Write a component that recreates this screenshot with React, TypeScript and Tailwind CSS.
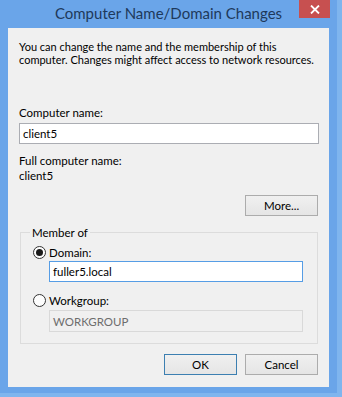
import React from 'react';

const font = { fontFamily: 'Lato, "Liberation Sans", sans-serif' };

function Radio({ checked }: { checked?: boolean }) {
  return (
    <span className="flex h-[13px] w-[13px] shrink-0 items-center justify-center rounded-full border border-[#333333] bg-[#fdfdfd]">
      {checked && <span className="h-[7px] w-[7px] rounded-full bg-[#1a1a1a]" />}
    </span>
  );
}

function Button({ label, primary }: { label: string; primary?: boolean }) {
  return (
    <button
      className={`flex h-[21px] w-[73px] items-center justify-center border bg-gradient-to-b from-[#f0f0f0] to-[#e5e5e5] text-[11.5px] leading-[13px] text-black ${
        primary ? 'border-[#3c7fb1]' : 'border-[#acacac]'
      }`}
    >
      {label}
    </button>
  );
}

export default function App() {
  return (
    <div className="h-[397px] w-[342px] overflow-hidden bg-[#7fb5ee]" style={font}>
      <div className="flex h-[393px] w-[337px] flex-col bg-[#6aa5e9] pb-[6px] pl-[8px] pr-[8px]">
        {/* Title bar */}
        <div className="grid h-[28px] shrink-0 grid-cols-[1fr_auto_1fr]">
          <div />
          <div className="pt-[3px] text-[15px] leading-[20px] text-[#1e395b]">Computer Name/Domain Changes</div>
          <div className="flex justify-end">
            <div className="-mr-[1px] flex h-[18px] w-[31px] items-center justify-center bg-[#c75050]">
              <svg width="10" height="9" viewBox="0 0 10 9">
                <path d="M1 0.5 L9 8.5 M9 0.5 L1 8.5" stroke="white" strokeWidth="1.8" />
              </svg>
            </div>
          </div>
        </div>

        {/* Client area */}
        <div className="flex flex-1 flex-col bg-[#f0f0f0] pl-[11px] pr-[10px] pt-[12px] text-[11.5px] leading-[13px] text-black">
          <p className="whitespace-nowrap text-[11px]">
            You can change the name and the membership of this
            <br />
            computer. Changes might affect access to network resources.
          </p>

          <div className="mt-[40px]">Computer name:</div>
          <div className="mt-[4px] flex h-[21px] items-center border border-[#abadb3] bg-white px-[3px]">client5</div>

          <div className="mt-[9px] leading-[15px]">Full computer name:</div>
          <div className="leading-[15px]">client5</div>

          <div className="mt-[12px] flex justify-end pr-[1px]">
            <Button label="More..." />
          </div>

          <fieldset className="mx-[1px] mt-[10px] border border-[#dcdcdc] pb-[11px] pl-[12px] pr-[14px]">
            <legend className="ml-[-3px] px-[2px]">Member of</legend>
            <div className="mt-[7px] flex items-center gap-[3px]">
              <Radio checked />
              <span>Domain:</span>
            </div>
            <div className="ml-[16px] mt-[2px] flex h-[21px] items-center border border-[#569de5] bg-white px-[3px]">
              fuller5.local
            </div>
            <div className="mt-[12px] flex items-center gap-[3px]">
              <Radio />
              <span>Workgroup:</span>
            </div>
            <div className="ml-[16px] mt-[3px] flex h-[22px] items-center border border-[#d9d9d9] bg-[#f0f0f0] px-[3px] text-[#6d6d6d]">
              WORKGROUP
            </div>
          </fieldset>

          <div className="mt-[10px] flex justify-end gap-[8px] pr-[1px]">
            <Button label="OK" primary />
            <Button label="Cancel" />
          </div>
        </div>
      </div>
    </div>
  );
}
